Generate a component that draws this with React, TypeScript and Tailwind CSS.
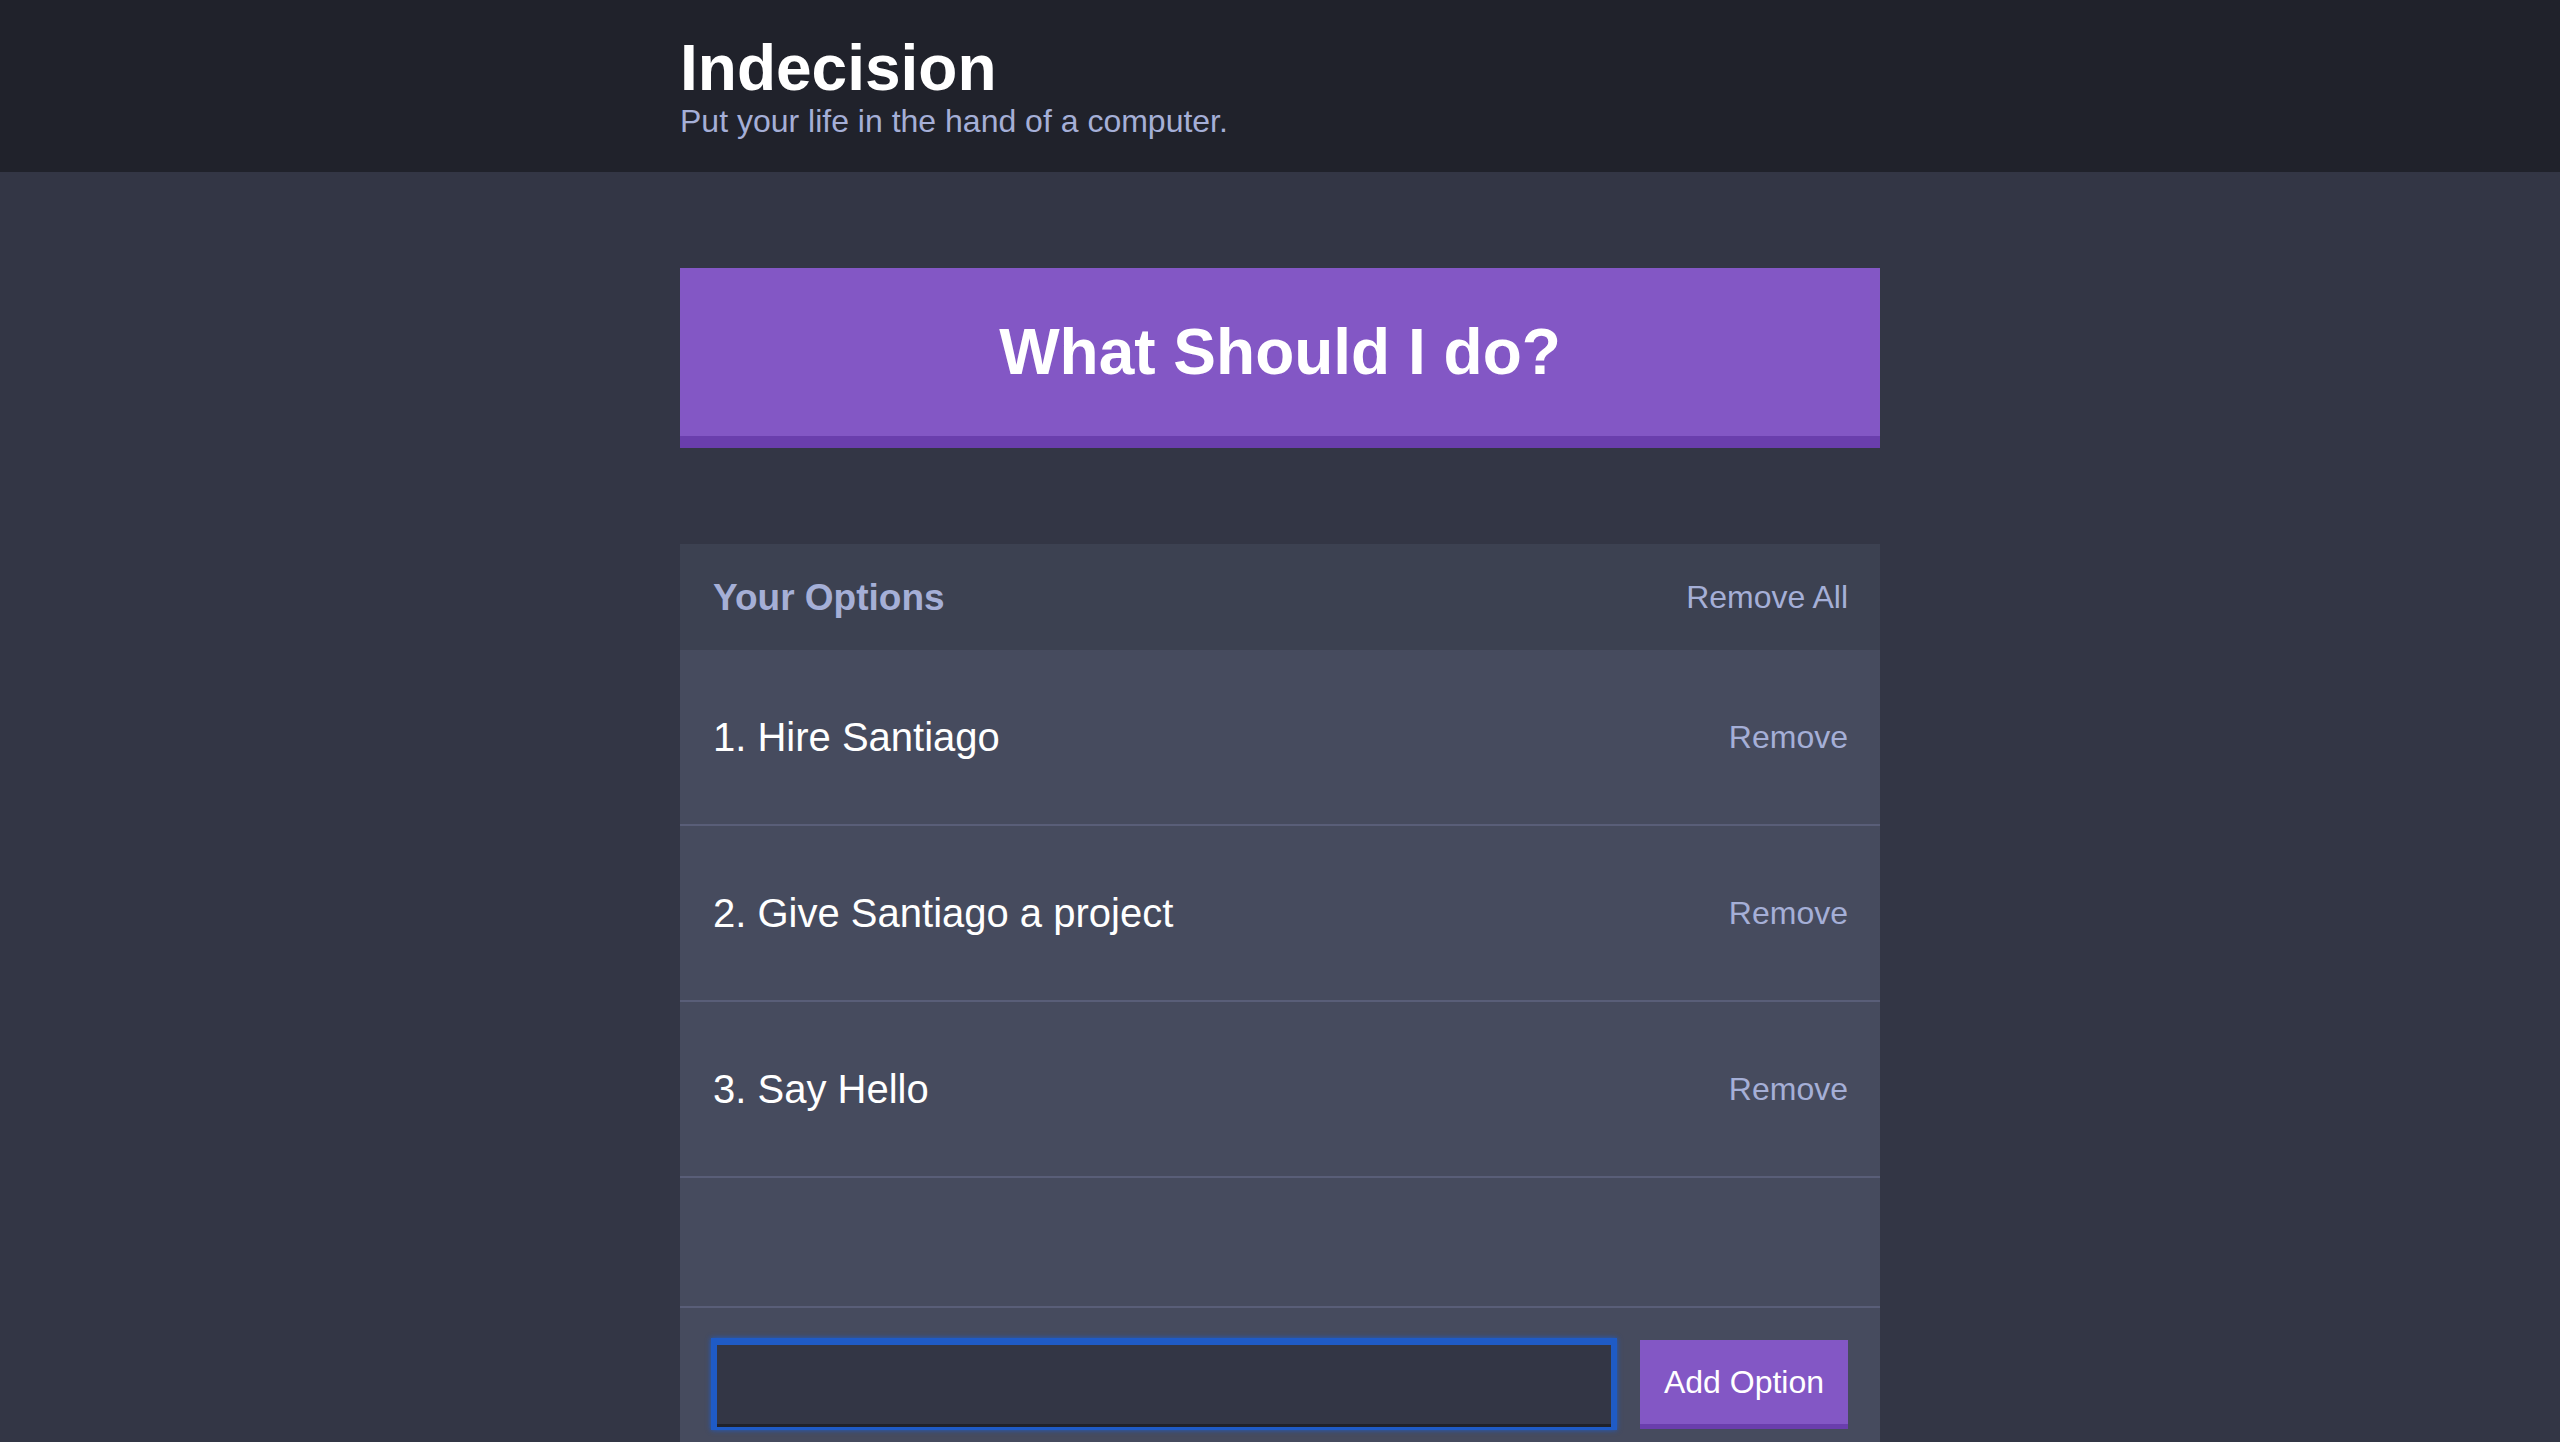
import React from "react";

const options = ["Hire Santiago", "Give Santiago a project", "Say Hello"];

export default function App() {
  return (
    <div
      className="min-h-[1442px] bg-[#333645] text-white"
      style={{ fontFamily: '"Liberation Sans", Arial, Helvetica, sans-serif' }}
    >
      <header className="bg-[#20222b]">
        <div className="mx-auto w-[1200px] pt-[36px] pb-[35px]">
          <h1 className="text-[64px] font-bold leading-[64px]">Indecision</h1>
          <p className="mt-[5px] text-[32px] leading-[32px] text-[#a5afd7]">
            Put your life in the hand of a computer.
          </p>
        </div>
      </header>

      <main className="mx-auto w-[1200px] pt-[96px]">
        <button className="flex h-[180px] w-full items-center justify-center border-b-[12px] border-[#6a3ead] bg-[#8357c5] text-[64px] font-bold leading-none text-white">
          What Should I do?
        </button>

        <section className="mt-[96px] bg-[#464b5e]">
          <div className="flex h-[106px] items-center justify-between bg-[#3c4151] pl-[33px] pr-[32px]">
            <h3 className="text-[37px] font-bold leading-none text-[#a5afd7]">Your Options</h3>
            <button className="text-[32px] leading-none text-[#a5afd7]">Remove All</button>
          </div>

          {options.map((o, i) => (
            <div
              key={o}
              className="flex h-[176px] items-center justify-between border-b-2 border-[#595e78] pl-[33px] pr-[32px]"
            >
              <p className="text-[40px] leading-none text-white">
                {i + 1}. {o}
              </p>
              <button className="text-[32px] leading-none text-[#a5afd7]">Remove</button>
            </div>
          ))}

          <div className="h-[130px] border-b-2 border-[#595e78]" />

          <form className="flex items-start gap-[23px] pt-[30px] pb-[40px] pl-[31px] pr-[32px]">
            <input
              type="text"
              className="h-[92px] flex-1 border-x-[6px] border-t-[7px] border-b-[3px] border-[#1f5bc6] bg-[#333645] text-[32px] text-white shadow-[inset_0_-3px_0_#20222b,0_0_5px_#1f5bc6] outline-none"
            />
            <button
              type="button"
              className="mt-[2px] flex h-[89px] w-[208px] items-center justify-center border-b-[5px] border-[#6a3ead] bg-[#8357c5] text-[32px] leading-none text-white"
            >
              Add Option
            </button>
          </form>
        </section>
      </main>
    </div>
  );
}
